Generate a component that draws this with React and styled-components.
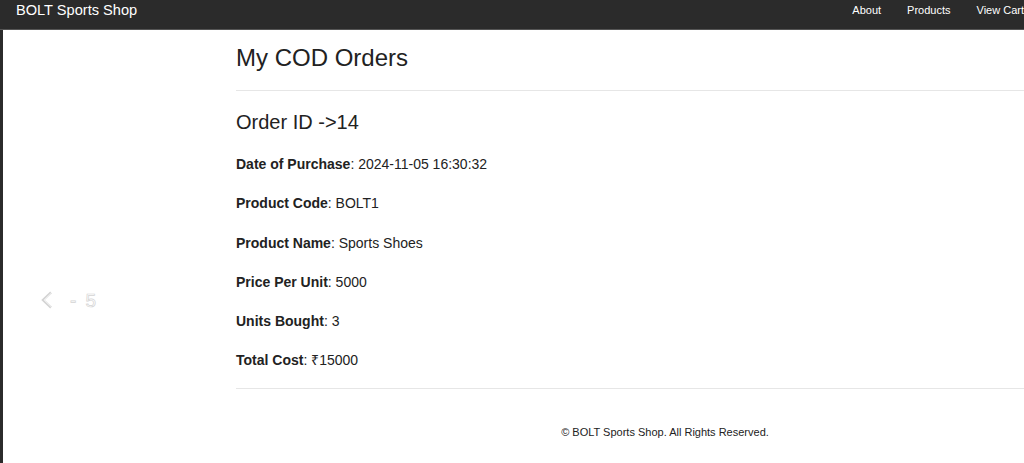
import styled, { createGlobalStyle } from "styled-components";

const Global = createGlobalStyle`
  html, body {
    margin: 0;
    padding: 0;
    overflow: hidden;
    background: #fff;
  }
  body {
    font-family: "Liberation Sans", Arial, sans-serif;
    color: #222;
  }
`;

const Nav = styled.nav`
  box-sizing: border-box;
  height: 30px;
  background: #2b2b2b;
  border-bottom: 1px solid #555;
  display: flex;
  align-items: flex-start;
  padding: 2px 0 0 16px;
  margin-right: -13px;
`;

const Brand = styled.a`
  color: #fff;
  font-size: 14.6px;
  line-height: 17px;
  text-decoration: none;
`;

const NavList = styled.ul`
  display: flex;
  margin: 0 0 0 auto;
  padding: 1px 0 0;
  list-style: none;
`;

const NavLink = styled.a`
  display: block;
  color: #fff;
  font-size: 11px;
  line-height: 15px;
  padding: 0 13px;
  text-decoration: none;
`;

const Page = styled.div`
  display: grid;
  grid-template-columns: 233px 858px;
  border-left: 3px solid #2b2b2b;
  min-height: calc(100vh - 30px);
`;

const Side = styled.aside`
  display: flex;
  align-items: flex-start;
  padding: 261px 0 0 37px;
  gap: 16px;
`;

const Ghost = styled.span`
  font-size: 19px;
  line-height: 20px;
  color: #fff;
  -webkit-text-stroke: 0.7px #d4d4d4;
  letter-spacing: 2px;
`;

const Main = styled.main`
  padding-top: 15px;
`;

const Title = styled.h2`
  margin: 0;
  font-size: 24px;
  font-weight: 400;
  line-height: 26px;
`;

const Rule = styled.hr`
  border: 0;
  border-top: 1px solid #e6e6e6;
  margin: ${({ $top }) => $top}px 0 0;
`;

const OrderId = styled.h3`
  margin: 20px 0 21px;
  font-size: 20px;
  font-weight: 400;
  line-height: 22px;
`;

const Field = styled.p`
  margin: 0 0 19.3px;
  font-size: 14px;
  line-height: 20px;
  &:last-of-type {
    margin-bottom: 0;
  }
`;

const Footer = styled.footer`
  margin-top: 36px;
  text-align: center;
  font-size: 11px;
  line-height: 14px;
`;

const fields = [
  ["Date of Purchase", "2024-11-05 16:30:32"],
  ["Product Code", "BOLT1"],
  ["Product Name", "Sports Shoes"],
  ["Price Per Unit", "5000"],
  ["Units Bought", "3"],
  ["Total Cost", "₹15000"],
];

export default function App() {
  return (
    <>
      <Global />
      <Nav>
        <Brand href="#">BOLT Sports Shop</Brand>
        <NavList>
          <li><NavLink href="#">About</NavLink></li>
          <li><NavLink href="#">Products</NavLink></li>
          <li><NavLink href="#">View Cart</NavLink></li>
        </NavList>
      </Nav>
      <Page>
        <Side>
          <svg width="14" height="18" viewBox="0 0 14 18">
            <path d="M11 1.5 L3 9 L11 16.5" fill="none" stroke="#d4d4d4" strokeWidth="2.4" />
            <path d="M11 2.5 L4.2 9 L11 15.5" fill="none" stroke="#fff" strokeWidth="0.8" />
          </svg>
          <Ghost>- 5</Ghost>
        </Side>
        <Main>
          <Title>My COD Orders</Title>
          <Rule $top={19} />
          <OrderId>Order ID -&gt;14</OrderId>
          {fields.map(([k, v]) => (
            <Field key={k}>
              <b>{k}</b>: {v}
            </Field>
          ))}
          <Rule $top={18} />
          <Footer>© BOLT Sports Shop. All Rights Reserved.</Footer>
        </Main>
      </Page>
    </>
  );
}
